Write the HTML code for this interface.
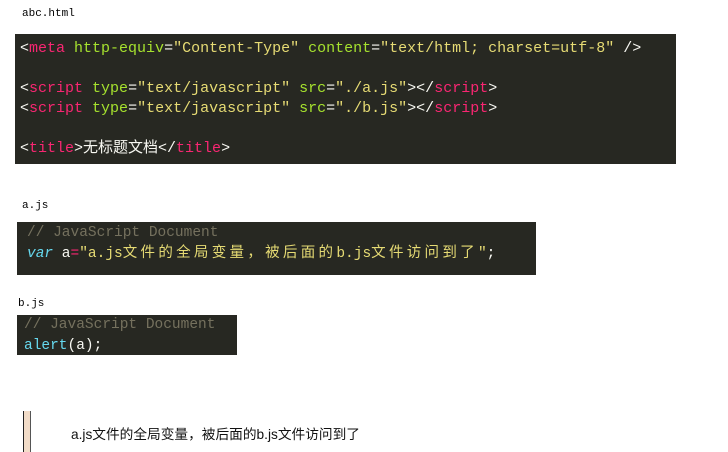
<!DOCTYPE html>
<html><head><meta charset="utf-8"><style>
body{margin:0;width:728px;height:452px;background:#fff;position:relative;overflow:hidden;font-family:"Liberation Mono","Noto Sans CJK SC",monospace}
.a{position:absolute}
.lbl{font-family:"Liberation Mono","Noto Sans CJK SC",monospace;font-size:11px;color:#000}
.code{background:#272822;color:#f8f8f2;white-space:pre}
.p{color:#f92672}.g{color:#a6e22e}.y{color:#e6db74}.c{color:#75715e}.b{color:#66d9ef}
.k{letter-spacing:3.3px}
</style></head><body>
<div class="a lbl" style="left:22px;top:8px">abc.html</div>
<div class="a code" style="left:15px;top:34px;width:661px;height:130px;font-size:15px;line-height:20px;padding-top:5px;box-sizing:border-box"><div style="padding-left:5px">&lt;<span class="p">meta</span> <span class="g">http-equiv</span>=<span class="y">"Content-Type"</span> <span class="g">content</span>=<span class="y">"text/html; charset=utf-8"</span> /&gt;

&lt;<span class="p">script</span> <span class="g">type</span>=<span class="y">"text/javascript"</span> <span class="g">src</span>=<span class="y">"./a.js"</span>&gt;&lt;/<span class="p">script</span>&gt;
&lt;<span class="p">script</span> <span class="g">type</span>=<span class="y">"text/javascript"</span> <span class="g">src</span>=<span class="y">"./b.js"</span>&gt;&lt;/<span class="p">script</span>&gt;

&lt;<span class="p">title</span>&gt;无标题文档&lt;/<span class="p">title</span>&gt;</div></div>
<div class="a lbl" style="left:22px;top:200px">a.js</div>
<div class="a code" style="left:17px;top:222px;width:519px;height:53px;font-size:14.5px;line-height:21px;padding:1px 0 0 10px;box-sizing:border-box"><span class="c">// JavaScript Document</span>
<i class="b">var</i> a<span class="p">=</span><span class="y">"a.js<span class="k">文件的全局变量，被后面的</span>b.js<span class="k">文件访问到了</span>"</span>;</div>
<div class="a lbl" style="left:18px;top:298px">b.js</div>
<div class="a code" style="left:17px;top:316px;width:220px;height:40px;font-size:14.5px;line-height:21px;padding-left:7px;box-sizing:border-box;margin-top:-1px"><span class="c">// JavaScript Document</span>
<span class="b">alert</span>(a);</div>
<div class="a" style="left:23px;top:411px;width:6px;height:41px;background:#f2dcc8;border-left:1px solid #222;border-right:1px solid #555"></div>
<div class="a" style="left:71px;top:423px;font-family:'Liberation Sans','Noto Sans CJK SC',sans-serif;font-size:13.7px;color:#111">a.js文件的全局变量，被后面的b.js文件访问到了</div>
</body></html>
